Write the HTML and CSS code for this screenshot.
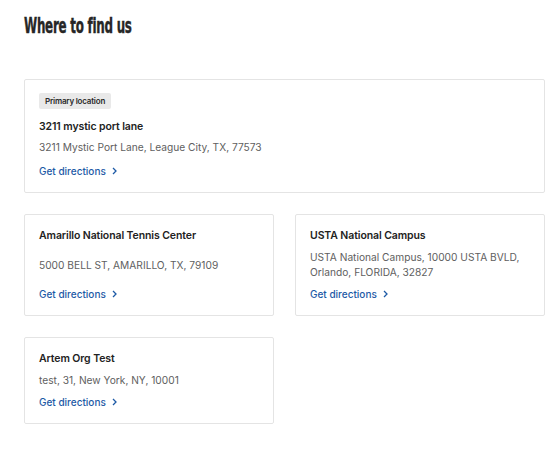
FILE: index.html
```html
<!DOCTYPE html>
<html>
<head>
<meta charset="utf-8">
<link rel="stylesheet" href="styles.css">
</head>
<body>
<main class="page">
  <h1 class="heading">Where to find us</h1>
  <div class="grid">
    <div class="card card-wide">
      <span class="badge">Primary location</span>
      <div class="title">3211 mystic port lane</div>
      <div class="addr">3211 Mystic Port Lane, League City, TX, 77573</div>
      <a class="link" href="#">Get directions <svg class="chev" width="7" height="8" viewBox="0 0 7 8"><path d="M2 1l3 3-3 3" fill="none" stroke="currentColor" stroke-width="1.3"/></svg></a>
    </div>
    <div class="card">
      <div class="title">Amarillo National Tennis Center</div>
      <div class="addr">5000 BELL ST, AMARILLO, TX, 79109</div>
      <a class="link" href="#">Get directions <svg class="chev" width="7" height="8" viewBox="0 0 7 8"><path d="M2 1l3 3-3 3" fill="none" stroke="currentColor" stroke-width="1.3"/></svg></a>
    </div>
    <div class="card">
      <div class="title">USTA National Campus</div>
      <div class="addr">USTA National Campus, 10000 USTA BVLD, Orlando, FLORIDA, 32827</div>
      <a class="link" href="#">Get directions <svg class="chev" width="7" height="8" viewBox="0 0 7 8"><path d="M2 1l3 3-3 3" fill="none" stroke="currentColor" stroke-width="1.3"/></svg></a>
    </div>
    <div class="card">
      <div class="title">Artem Org Test</div>
      <div class="addr">test, 31, New York, NY, 10001</div>
      <a class="link" href="#">Get directions <svg class="chev" width="7" height="8" viewBox="0 0 7 8"><path d="M2 1l3 3-3 3" fill="none" stroke="currentColor" stroke-width="1.3"/></svg></a>
    </div>
  </div>
</main>
</body>
</html>
```
FILE: styles.css
```css
* { box-sizing: border-box; }
body {
  margin: 0;
  background: #fff;
  font-family: Inter, "Noto Sans", sans-serif;
  color: #222;
}
.page {
  padding: 14px 14px 0 24px;
}
.heading {
  margin: 0;
  font-family: "DejaVu Sans Condensed", "DejaVu Sans", sans-serif;
  font-weight: bold;
  font-size: 21px;
  line-height: 24px;
  letter-spacing: -0.4px;
  color: #262626;
  -webkit-text-stroke: 0.4px #262626;
  transform: scaleX(0.63);
  transform-origin: left center;
}
.grid {
  margin-top: 41px;
  display: grid;
  grid-template-columns: 250px 250px;
  column-gap: 21px;
  row-gap: 21px;
}
.card {
  border: 1px solid #e4e4e4;
  border-radius: 2px;
  padding: 13px 14px 13px 14px;
  display: flex;
  flex-direction: column;
  justify-content: space-between;
  align-items: flex-start;
  gap: 6px;
}
.card-wide {
  grid-column: 1 / 3;
  gap: 0;
  justify-content: flex-start;
}
.badge {
  display: inline-block;
  background: #e9e9e9;
  border-radius: 2px;
  font-size: 8px;
  font-weight: 600;
  letter-spacing: -0.2px;
  line-height: 16px;
  height: 16px;
  padding: 0 6px;
  color: #2a2a2a;
  margin-bottom: 10px;
}
.title {
  font-size: 10.5px;
  font-weight: 600;
  line-height: 16px;
  color: #222;
  letter-spacing: -0.1px;
}
.card-wide .title { margin-bottom: 5px; }
.addr {
  font-size: 10.2px;
  line-height: 15px;
  color: #606060;
}
.card-wide .addr { margin-bottom: 8px; }
.link {
  font-size: 10px;
  font-weight: 500;
  line-height: 16px;
  color: #1d5aa6;
  text-decoration: none;
  display: inline-flex;
  align-items: center;
  gap: 5px;
}
.chev { display: block; }
```
